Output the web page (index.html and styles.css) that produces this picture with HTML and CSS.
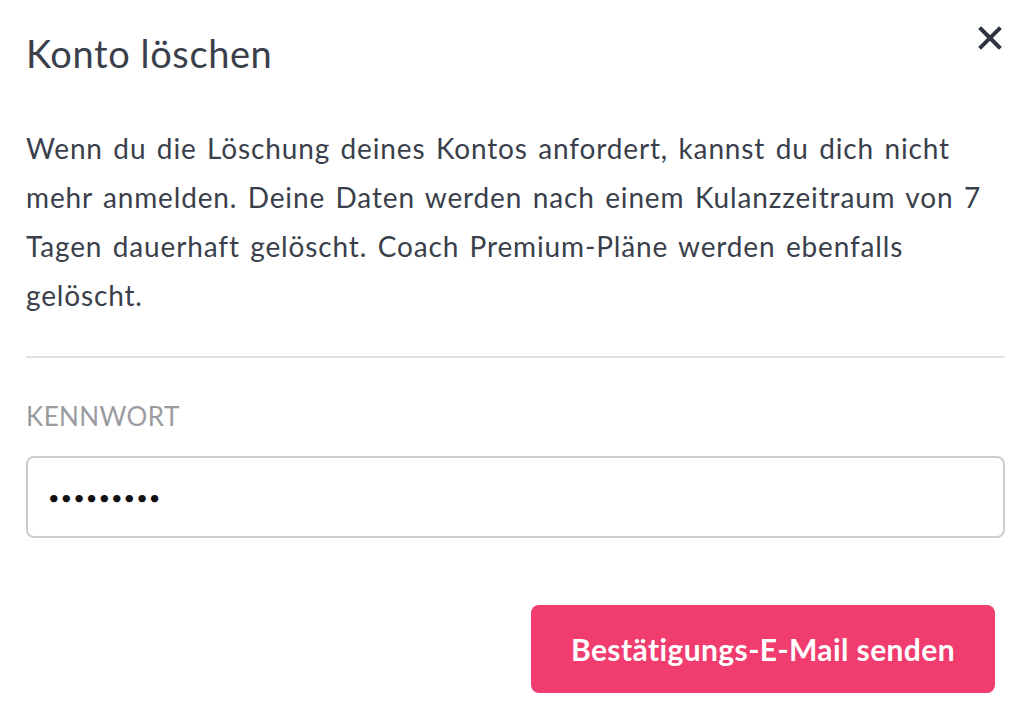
FILE: index.html
```html
<!DOCTYPE html>
<html lang="de">
<head>
  <meta charset="UTF-8">
  <title>Konto löschen</title>
  <link rel="stylesheet" href="styles.css">
</head>
<body>

  <div class="modal">
    <div class="modal-header">
      <h1 class="modal-title">Konto löschen</h1>
      <button class="close-btn" aria-label="Schließen">
        <svg width="24" height="24" viewBox="0 0 24 24">
          <path d="M3 3 L21 21 M21 3 L3 21" stroke="#2e3440" stroke-width="4" stroke-linecap="square" fill="none"/>
        </svg>
      </button>
    </div>

    <p class="modal-text">
      Wenn du die Löschung deines Kontos anfordert, kannst du dich nicht
      mehr anmelden. Deine Daten werden nach einem Kulanzzeitraum von 7
      Tagen dauerhaft gelöscht. Coach Premium-Pläne werden ebenfalls
      gelöscht.
    </p>

    <hr class="divider">

    <label class="field-label" for="password">KENNWORT</label>
    <input class="field-input" type="password" id="password" value="geheim123">

    <div class="actions">
      <button class="primary-btn">Bestätigungs-E-Mail senden</button>
    </div>
  </div>

</body>
</html>
```

FILE: styles.css
```css
body {
  margin: 0;
  background: #ffffff;
  font-family: 'Lato', 'Open Sans', sans-serif;
  color: #3a3f4b;
}

.modal {
  padding: 26px 25px 20px 26px;
}

.modal-header {
  display: flex;
  justify-content: space-between;
  align-items: flex-start;
}

.modal-title {
  margin: 0;
  font-size: 38px;
  font-weight: 400;
  line-height: 54px;
  letter-spacing: 0.6px;
  color: #3a3f4b;
}

.close-btn {
  background: none;
  border: none;
  padding: 0;
  margin: 0 3px 0 0;
  cursor: pointer;
}

.modal-text {
  margin: 44px 0 0 0;
  font-size: 28px;
  line-height: 49px;
  letter-spacing: 0.85px;
  word-spacing: 2.5px;
  color: #3a3f4b;
}

.divider {
  margin: 36px 0 0 0;
  border: none;
  border-top: 2px solid #e1e1e3;
}

.field-label {
  display: block;
  margin-top: 43px;
  font-size: 26px;
  line-height: 30px;
  letter-spacing: 0.4px;
  color: #9a9ba0;
}

.field-input {
  display: block;
  box-sizing: border-box;
  width: 100%;
  height: 82px;
  margin-top: 25px;
  padding: 0 20px;
  font-family: 'Lato', sans-serif;
  font-size: 20px;
  letter-spacing: 1px;
  border: 2px solid #cdcdcf;
  border-radius: 8px;
  color: #111;
  outline: none;
}

.actions {
  display: flex;
  justify-content: flex-end;
  margin-top: 67px;
  padding-right: 10px;
}

.primary-btn {
  width: 464px;
  height: 88px;
  background-color: #f03c6e;
  color: white;
  border: none;
  border-radius: 8px;
  font-family: 'Lato', sans-serif;
  font-size: 30px;
  font-weight: 700;
  letter-spacing: 0.4px;
  cursor: pointer;
}
```
